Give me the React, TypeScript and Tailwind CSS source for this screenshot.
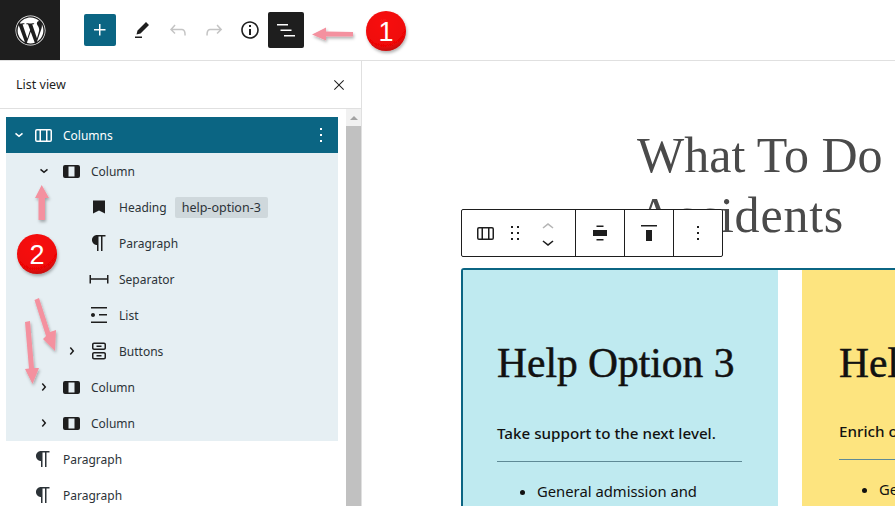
import React from "react";
import { FaWordpress } from "react-icons/fa";

const P: Record<string, string> = {
  plus: "M11 12.5V17.5H12.5V12.5H17.5V11H12.5V6H11V11H6V12.5H11Z",
  pencil: "m19 7-3-3-8.5 8.5-1 4 4-1L19 7Zm-7 11.5H5V20h7v-1.5Z",
  undo: "M18.3 11.7c-.6-.6-1.4-.9-2.3-.9H6.7l2.9-3.3-1.1-1-4.5 5L8.5 16l1-1-2.7-2.7H16c.5 0 .9.2 1.3.5 1 1 1 3.4 1 4.5v.3h1.5v-.2c0-1.5 0-4.3-1.5-5.7z",
  redo: "M15.6 6.5l-1.1 1 2.9 3.3H8c-.9 0-1.7.3-2.3.9-1.4 1.5-1.4 4.2-1.4 5.6v.2h1.5v-.3c0-1.1 0-3.5 1-4.5.3-.3.7-.5 1.3-.5h9.2L14.5 15l1.1 1.1 4.6-4.6-4.6-5z",
  info: "M12 3.2c-4.8 0-8.8 3.9-8.8 8.8 0 4.8 3.9 8.8 8.8 8.8 4.8 0 8.8-3.9 8.8-8.8 0-4.8-4-8.8-8.8-8.8zm0 16c-4 0-7.2-3.3-7.2-7.2C4.8 8 8 4.8 12 4.8s7.2 3.3 7.2 7.2c0 4-3.2 7.2-7.2 7.2zM11 17h2v-6h-2v6zm0-8h2V7h-2v2z",
  listView: "M3 6h11v1.5H3V6Zm3.5 5.5h11V13h-11v-1.5ZM21 17H10v1.5h11V17Z",
  close: "m13.06 12 6.47-6.47-1.06-1.06L12 10.94 5.53 4.47 4.47 5.53 10.94 12l-6.47 6.47 1.06 1.06L12 13.06l6.47 6.47 1.06-1.06L13.06 12Z",
  chevDown: "m15.99 10.889-3.988 3.418-3.988-3.418.976-1.14 3.012 2.582 3.012-2.581.976 1.139Z",
  chevRight: "M10.8622 8.04053L14.2805 12.0286L10.8622 16.0167L9.72327 15.0405L12.3049 12.0286L9.72327 9.01672L10.8622 8.04053Z",
  columns: "M15 7.5h-5v10h5v-10Zm1.5 0v10H19a.5.5 0 0 0 .5-.5V8a.5.5 0 0 0-.5-.5h-2.5ZM6 7.5h2.5v10H6a.5.5 0 0 1-.5-.5V8a.5.5 0 0 1 .5-.5ZM6 6h13a2 2 0 0 1 2 2v9a2 2 0 0 1-2 2H6a2 2 0 0 1-2-2V8a2 2 0 0 1 2-2Z",
  column: "M6 6h13a2 2 0 0 1 2 2v9a2 2 0 0 1-2 2H6a2 2 0 0 1-2-2V8a2 2 0 0 1 2-2Zm3.5 1.5v10h6v-10h-6Z",
  bookmark: "M6 5.5h12v13l-6-3-6 3v-13Z",
  paragraph: "m9.99609 14v-.2251l.00391.0001v6.225h1.5v-14.5h2.5v14.5h1.5v-14.5h3v-1.5h-8.50391c-2.76142 0-5 2.23858-5 5 0 2.7614 2.23858 5 5 5z",
  separator: "M2.5 8v8.5H4v-3.75h16v3.75h1.5V8H20v3.25H4V8H2.5Z",
  list: "M4 4v1.5h16V4H4zm8 8.5h8V11h-8v1.5zM4 20h16v-1.5H4V20zm4-8c0-1.1-.9-2-2-2s-2 .9-2 2 .9 2 2 2 2-.9 2-2z",
  buttons: "M14.5 17.5H9.5V16H14.5V17.5Z M14.5 8H9.5V6.5H14.5V8Z M7 3.5H17C18.1046 3.5 19 4.39543 19 5.5V9C19 10.1046 18.1046 11 17 11H7C5.89543 11 5 10.1046 5 9V5.5C5 4.39543 5.89543 3.5 7 3.5ZM17 5H7C6.72386 5 6.5 5.22386 6.5 5.5V9C6.5 9.27614 6.72386 9.5 7 9.5H17C17.2761 9.5 17.5 9.27614 17.5 9V5.5C17.5 5.22386 17.2761 5 17 5Z M7 13H17C18.1046 13 19 13.8954 19 15V18.5C19 19.6046 18.1046 20.5 17 20.5H7C5.89543 20.5 5 19.6046 5 18.5V15C5 13.8954 5.89543 13 7 13ZM17 14.5H7C6.72386 14.5 6.5 14.7239 6.5 15V18.5C6.5 18.7761 6.72386 19 7 19H17C17.2761 19 17.5 18.7761 17.5 18.5V15C17.5 14.7239 17.2761 14.5 17 14.5Z",
  more: "M13 19h-2v-2h2v2zm0-6h-2v-2h2v2zm0-6h-2V5h2v2z",
  drag: "M8 7h2V5H8v2zm0 6h2v-2H8v2zm0 6h2v-2H8v2zm6-14v2h2V5h-2zm0 8h2v-2h-2v2zm0 6h2v-2h-2v2z",
  alignCenter: "M8.5 4.5h7V6h-7V4.5ZM5 9h14v6H5V9Zm3.5 9h7v1.5h-7V18Z",
  alignTop: "M9 20h6V9H9v11zM4 4v1.5h16V4H4z",
  up: "M6.5 12.4L12 8l5.5 4.4-.9 1.2L12 10l-4.5 3.6-1-1.2z",
  down: "M17.5 11.6L12 16l-5.5-4.4.9-1.2L12 14l4.5-3.6 1 1.2z",
};

function Icon({ n, size = 24, className = "" }: { n: string; size?: number; className?: string }) {
  return (
    <svg viewBox="0 0 24 24" width={size} height={size} fill="currentColor" className={"shrink-0 " + className}>
      <path d={P[n]} fillRule="evenodd" />
    </svg>
  );
}

type Row = { chev?: "down" | "right"; icon: string; label: string; level: number; badge?: string };

const nested: Row[] = [
  { chev: "down", icon: "column", label: "Column", level: 1 },
  { icon: "bookmark", label: "Heading", level: 2, badge: "help-option-3" },
  { icon: "paragraph", label: "Paragraph", level: 2 },
  { icon: "separator", label: "Separator", level: 2 },
  { icon: "list", label: "List", level: 2 },
  { chev: "right", icon: "buttons", label: "Buttons", level: 2 },
  { chev: "right", icon: "column", label: "Column", level: 1 },
  { chev: "right", icon: "column", label: "Column", level: 1 },
];

function TreeRow({ r }: { r: Row }) {
  return (
    <div className="flex h-9 items-center text-[12px] text-[#2c3338]">
      <div className="shrink-0" style={{ width: r.level * 28 }} />
      <div className="flex w-[25px] shrink-0 justify-end pr-[3px]">
        {r.chev && <Icon n={r.chev === "down" ? "chevDown" : "chevRight"} size={24} className="text-[#1e1e1e]" />}
      </div>
      <Icon n={r.icon} size={24} className="text-[#1e1e1e]" />
      <span className="ml-2 pt-[2px]">{r.label}</span>
      {r.badge && (
        <span className="ml-2 rounded-[2px] bg-[#cfd8dc] px-[7px] py-[2px] text-[12.5px] leading-[17px] text-[#2c3338]">{r.badge}</span>
      )}
    </div>
  );
}

function Annotations() {
  return (
    <svg className="pointer-events-none absolute left-0 top-0" width={895} height={506}>
      <defs>
        <radialGradient id="red" cx="45%" cy="30%" r="75%">
          <stop offset="0%" stopColor="#f81414" />
          <stop offset="75%" stopColor="#ef0606" />
          <stop offset="100%" stopColor="#b80a0a" />
        </radialGradient>
        <filter id="sh" x="-40%" y="-40%" width="180%" height="180%">
          <feDropShadow dx="1" dy="2" stdDeviation="1.5" floodColor="#000" floodOpacity="0.3" />
        </filter>
      </defs>
      <g fill="#f4919f" filter="url(#sh)">
        <path d="M353 32 L326 31.5 L326 27.5 L312 34.5 L326 40.5 L326 36.5 L353 36.5 Z" />
        <path d="M38.5 220 L38.5 198 L35 198 L41.7 185 L49 198 L45 198 L45 220 Z" />
        <path d="M34.5 300 L39 298 L50 332 L56 330 L55 351 L43 339 L46 336 Z" />
        <path d="M25 322 L30 321 L34 368 L39 368 L32.5 384 L25 369 L29 368.5 Z" />
      </g>
      <g filter="url(#sh)">
        <circle cx="386" cy="31" r="20" fill="url(#red)" />
        <circle cx="37" cy="254" r="20" fill="url(#red)" />
      </g>
      <text x="386" y="41" textAnchor="middle" fontSize="27" fill="#fff" fontFamily="Liberation Sans, sans-serif">1</text>
      <text x="37" y="264" textAnchor="middle" fontSize="27" fill="#fff" fontFamily="Liberation Sans, sans-serif">2</text>
    </svg>
  );
}

export default function App() {
  const font = { fontFamily: '"Noto Sans", sans-serif' };
  return (
    <div className="relative flex h-[506px] w-[895px] flex-col overflow-hidden bg-white" style={font}>
      {/* Top bar */}
      <header className="flex h-[61px] shrink-0 items-start border-b border-[#e0e0e0]">
        <div className="flex h-[60px] w-[60px] items-center justify-center bg-[#1e1e1e] text-white">
          <FaWordpress size={31} />
        </div>
        <div className="ml-6 mt-[14px] flex h-8 w-8 items-center justify-center rounded-[2px] bg-[#0b6583] text-white">
          <Icon n="plus" />
        </div>
        <div className="ml-[14px] mt-[18px] flex w-6 justify-center text-[#1e1e1e]"><Icon n="pencil" /></div>
        <div className="ml-3 mt-[18px] text-[#c4c4c4]"><Icon n="undo" /></div>
        <div className="ml-3 mt-[18px] text-[#c4c4c4]"><Icon n="redo" /></div>
        <div className="ml-3 mt-[18px] text-[#1e1e1e]"><Icon n="info" /></div>
        <div className="ml-[6px] mt-3 flex h-9 w-9 items-center justify-center rounded-[2px] bg-[#1e1e1e] text-white">
          <Icon n="listView" />
        </div>
      </header>

      <div className="flex min-h-0 flex-1">
        {/* Sidebar */}
        <aside className="flex w-[362px] shrink-0 flex-col border-r border-[#e0e0e0]">
          <div className="flex h-12 shrink-0 items-center justify-between border-b border-[#e0e0e0] pl-4 pr-[14px]">
            <span className="pt-[2px] text-[12.5px] text-[#1e1e1e]">List view</span>
            <Icon n="close" size={16} className="text-[#1e1e1e]" />
          </div>
          <div className="flex min-h-0 flex-1">
            <div className="min-w-0 flex-1 pl-[6px] pr-2 pt-2">
              <div className="flex h-9 items-center bg-[#0b6583] text-[12px] text-white">
                <Icon n="chevDown" size={24} className="ml-[1px]" />
                <Icon n="columns" size={24} />
                <span className="ml-2 pt-[2px]">Columns</span>
                <Icon n="more" size={24} className="ml-auto mr-[5px]" />
              </div>
              <div className="bg-[#e6eff3]">
                {nested.map((r, i) => <TreeRow key={i} r={r} />)}
              </div>
              {[0, 1].map((i) => (
                <div key={i} className="flex h-9 items-center text-[12px] text-[#2c3338]">
                  <div className="w-[25px] shrink-0" />
                  <Icon n="paragraph" />
                  <span className="ml-2 pt-[2px]">Paragraph</span>
                </div>
              ))}
            </div>
            <div className="flex w-[15px] shrink-0 flex-col bg-[#f1f1f1]">
              <div className="flex h-[17px] items-center justify-center">
                <div className="h-0 w-0 border-x-[4px] border-b-[4px] border-x-transparent border-b-[#a3a3a3]" />
              </div>
              <div className="flex-1 bg-[#c1c1c1]" />
            </div>
          </div>
        </aside>

        {/* Canvas */}
        <main className="relative min-w-0 flex-1 overflow-hidden">
          <div
            className="ml-[275px] whitespace-nowrap pt-[64px] text-[50px] leading-[60px] text-[#4a4a4a]"
            style={{ fontFamily: '"Liberation Serif", serif' }}
          >
            <div>What To Do</div>
            <div className="tracking-[0.8px]">Accidents</div>
          </div>

          <div className="ml-[99px] mt-[23px] flex min-h-[300px] w-[600px] rounded-[3px] border-2 border-[#0b6583]">
            <div className="w-[315px] shrink-0 bg-[#bfeaf0] pl-[34px] pr-[34px] pt-[69px]">
              <Column title="Help Option 3" sub="Take support to the next level." />
            </div>
            <div className="ml-6 flex-1 bg-[#fde47f] pl-[37px] pr-2 pt-[69px]">
              <Column title="Help Option 2" sub="Enrich our community." compact />
            </div>
          </div>

          {/* Floating block toolbar */}
          <div className="absolute left-[99px] top-[148px] flex h-12 w-[262px] items-center rounded-[2px] border border-[#1e1e1e] bg-white text-[#1e1e1e]">
            <div className="flex h-full w-[114px] items-center border-r border-[#1e1e1e] pl-[11px]">
              <Icon n="columns" size={24} />
              <Icon n="drag" size={24} className="ml-[6px]" />
              <div className="ml-[9px] flex flex-col">
                <Icon n="up" size={24} className="mb-[-9px] mt-[-1px] text-[#b5b5b5]" />
                <Icon n="down" size={24} className="mb-[-3px]" />
              </div>
            </div>
            <div className="flex h-full w-[49px] items-center justify-center border-r border-[#1e1e1e]"><Icon n="alignCenter" /></div>
            <div className="flex h-full w-[49px] items-center justify-center border-r border-[#1e1e1e]"><Icon n="alignTop" /></div>
            <div className="flex h-full flex-1 items-center justify-center"><Icon n="more" /></div>
          </div>
        </main>
      </div>

      <Annotations />
    </div>
  );
}

function Column({ title, sub, compact }: { title: string; sub: string; compact?: boolean }) {
  return (
    <div className="whitespace-nowrap text-[#111]">
      <h2
        className="text-[41.5px] font-normal leading-[48px] [-webkit-text-stroke:0.5px_#111]"
        style={{ fontFamily: '"Liberation Serif", serif' }}
      >
        {title}
      </h2>
      <p className={"text-[15.2px] font-medium leading-[22px] " + (compact ? "mt-[33px]" : "mt-[35px]")}>{sub}</p>
      <div className="mt-[17px] h-px w-[245px] bg-[#5f8a96]" />
      <ul className="mt-[17px] list-disc pl-[40px] text-[14.8px] leading-[24px]">
        <li>General admission and</li>
      </ul>
    </div>
  );
}
